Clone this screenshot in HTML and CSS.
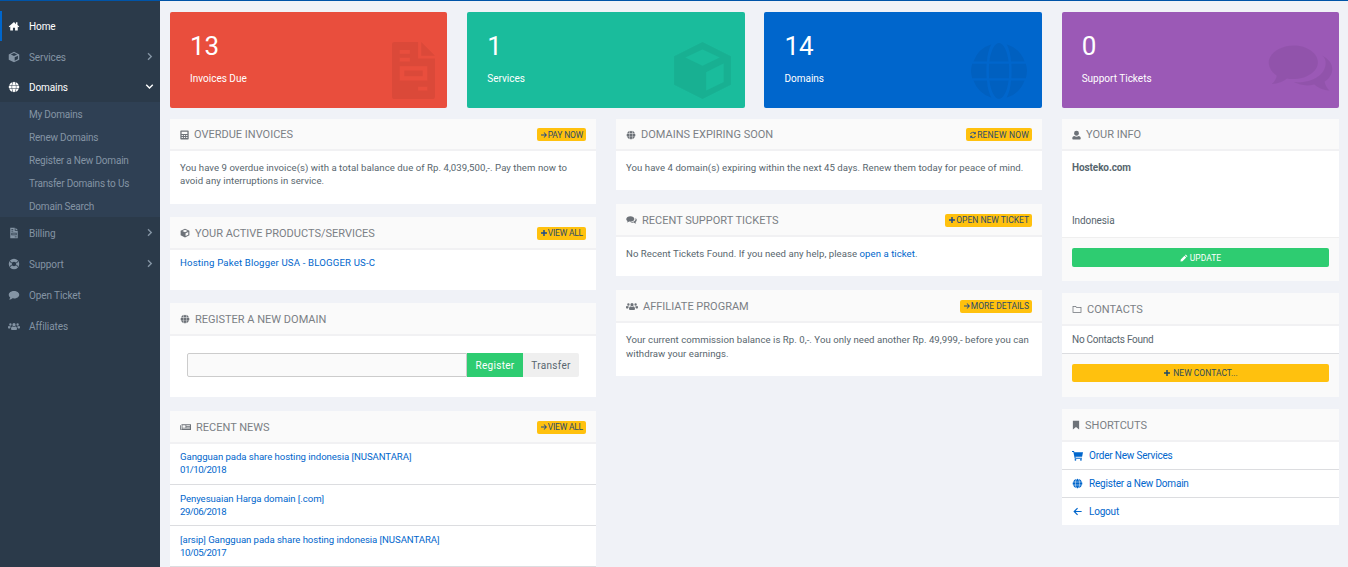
FILE: index.html
```html
<!DOCTYPE html>
<html lang="en">
<head>
<meta charset="utf-8">
<title>Client Area</title>
<link rel="stylesheet" href="styles.css">
</head>
<body>
<svg class="defs" width="0" height="0">
  <symbol id="i-home" viewBox="0 0 16 16"><path d="M8 2.500 1 8.600l.9 1L3 8.700V14h3.600v-3.600h2.800V14H13V8.700l1.100.9.9-1-2.400-2.100V3h-2v2.700z"/></symbol>
  <symbol id="i-cube" viewBox="0 0 16 16"><path fill-rule="evenodd" d="M8 1l7 3.500v7L8 15l-7-3.500v-7zM8 2.800 3.800 4.800 8 6.800l4.200-2zM8.900 8.400v4.500l4.300-2.100V6.300z"/></symbol>
  <symbol id="i-globe" viewBox="0 0 16 16"><path d="M5.600 5.600C5.900 3 6.900 1 8 1s2.100 2 2.400 4.600zM5 5.600H1.600A7 7 0 0 1 6.100 1.300C5.500 2.400 5.100 3.900 5 5.600zM11 5.600h3.400A7 7 0 0 0 9.900 1.300C10.500 2.400 10.900 3.900 11 5.600zM1.300 6.200H4.900C4.850 7.400 4.850 8.600 4.900 9.800H1.300C.9 8.600 .9 7.400 1.300 6.200zM5.500 6.200h5c.05 1.200.05 2.400 0 3.600h-5c-.05-1.200-.05-2.400 0-3.600zM11.100 6.200h3.600c.4 1.200.4 2.400 0 3.600h-3.600c.05-1.200.05-2.400 0-3.600zM5.600 10.400C5.900 13 6.900 15 8 15s2.100-2 2.400-4.600zM5 10.400H1.600A7 7 0 0 0 6.100 14.700C5.500 13.600 5.100 12.100 5 10.400zM11 10.400h3.400A7 7 0 0 1 9.900 14.700C10.500 13.600 10.900 12.100 11 10.400z"/></symbol>
  <symbol id="i-file" viewBox="1 0 14 20" preserveAspectRatio="none"><path fill-rule="evenodd" d="M1 0h8.500v5.800H15v13.400c0 .5-.3.800-.8.800H1.800c-.5 0-.8-.3-.8-.8V.8C1 .3 1.300 0 1.800 0zM10.500 0 15 4.800h-4.500zM3.500 2.800v1.300h3.300V2.800zm0 2.700v1.300h3.300V5.500zm0 3v5h9v-5zm1.500 1.500h6v2H5zm4.500 5.700v1.300h3v-1.300z"/></symbol>
  <symbol id="i-bill" viewBox="0 0 16 16"><path fill-rule="evenodd" d="M3 1h6v4h4v9.500c0 .3-.2.500-.5.500h-9c-.3 0-.5-.2-.5-.5zM10 1l3 3h-3zM4.500 3v1H7V3zm0 2v1H7V5zm0 2.500V11h7V7.500zm1 1h5V10h-5zm3.500 4V13.500h2.500v-1z"/></symbol>
  <symbol id="i-life" viewBox="0 0 16 16"><path fill-rule="evenodd" d="M8 1a7 7 0 1 0 0 14A7 7 0 0 0 8 1zm0 4a3 3 0 1 1 0 6 3 3 0 0 1 0-6zM3 3.900l2.300 2.300-.9.900L2.300 5zM13 3.900 13.700 5l-2.100 2.100-.9-.9zM4.400 8.900l.9.900L3 12.100 2.300 11zm7.200 0 2.100 2.100-.7 1.100-2.300-2.300z"/></symbol>
  <symbol id="i-comment" viewBox="0 0 16 16"><path d="M8 2.500c3.900 0 7 2.200 7 5s-3.100 5-7 5c-.7 0-1.300-.1-2-.2C5 13.200 3.500 14 1.500 14c.8-.8 1.300-1.700 1.500-2.700C1.800 10.400 1 9 1 7.500c0-2.800 3.100-5 7-5z"/></symbol>
  <symbol id="i-comments" viewBox="0 0 20 16"><path d="M8 1c4 0 7.200 2.300 7.200 5S12 11 8 11c-.7 0-1.300 0-2-.2C5 11.700 3.400 12.300 1.400 12.500c.8-.7 1.300-1.500 1.500-2.500C1.400 9 .5 7.600.5 6 .5 3.300 4 1 8 1z"/><path d="M16.400 4c1.900.9 3.100 2.400 3.100 4 0 1.500-.9 2.900-2.300 3.800.2 1 .7 1.900 1.500 2.700-2-.2-3.500-.9-4.600-1.900-.7.200-1.400.3-2.100.3-1.500 0-2.900-.4-4-1 5 .4 9.500-1.900 9.500-5.800 0-.7-.3-1.500-1.100-2.100z"/></symbol>
  <symbol id="i-users" viewBox="0 0 20 16"><path d="M10 3.200a2.700 2.700 0 1 1 0 5.400 2.700 2.700 0 0 1 0-5.400zM5 13c0-3 1.500-4 2.700-4 .7.500 1.400.8 2.300.8s1.600-.3 2.300-.8c1.200 0 2.700 1 2.700 4 0 1-.7 1.500-1.600 1.500H6.600C5.700 14.500 5 14 5 13zM4 3.500a2 2 0 1 1 0 4 2 2 0 0 1 0-4zm12 0a2 2 0 1 1 0 4 2 2 0 0 1 0-4zM0 10.300c0-1.600.7-2.300 1.800-2.300.6.400 1.400.6 2.200.5.200.5.500.9.900 1.100-1 .7-1.500 1.600-1.600 2.400H1.200C.5 12 0 11.400 0 10.300zm20 0c0 1.100-.5 1.700-1.200 1.700h-2.100c-.1-.8-.6-1.700-1.600-2.400.4-.2.700-.6.900-1.100.8.100 1.600-.1 2.200-.5 1.100 0 1.800.7 1.800 2.300z"/></symbol>
  <symbol id="i-calc" viewBox="1 1 14 14"><path fill-rule="evenodd" d="M2.500 1h11c.5 0 1 .5 1 1v12c0 .5-.5 1-1 1h-11c-.5 0-1-.5-1-1V2c0-.5.500-1 1-1zM3.500 3v3.500h9V3zm0 5v1.500h2V8zm3.500 0v1.500h2V8zm3.500 0v1.500h2V8zm-7 3v1.500h2V11zm3.500 0v1.500h2V11zm3.500 0v1.500h2V11z"/></symbol>
  <symbol id="i-news" viewBox="0 0 20 16"><path fill-rule="evenodd" d="M2 3h18v10.500H1.500C.7 13.500 0 12.800 0 12V5h1.500v7.500H3V4zM4.500 5v4.500H10V5zM11.500 5v1.200H18V5zm0 2.500v1.200H18V7.500zM4.500 10.500v1.200H18v-1.200z"/></symbol>
  <symbol id="i-user" viewBox="1 1 14 14"><path d="M8 1.500a3.800 3.800 0 0 1 3.800 3.800c0 2.100-1.700 4-3.800 4S4.200 7.400 4.200 5.300A3.800 3.800 0 0 1 8 1.500zM1.500 12.800c0-1.600 1.200-3 3.200-3.200.9.700 2 1.200 3.300 1.200s2.400-.5 3.300-1.200c2 .2 3.200 1.600 3.200 3.200v1c0 .6-.5 1.200-1.200 1.200H2.700c-.7 0-1.200-.6-1.200-1.200z"/></symbol>
  <symbol id="i-folder" viewBox="0 0 16 16"><path fill-rule="evenodd" d="M1 3h5l1.500 1.800H15V14H1zM2.200 4.200v8.600h11.600V6H7l-1.500-1.800z"/></symbol>
  <symbol id="i-bookmark" viewBox="2 0 12 16"><path d="M3 1h10v14l-5-3.700L3 15z"/></symbol>
  <symbol id="i-cart" viewBox="0 0 16 16"><path d="M0 1.500h3l.4 1.800H16l-1.300 6.500H5l.3 1.400h9.200v1.400H4L2 2.900H0zM5 13a1.300 1.300 0 1 1 0 2.600A1.300 1.300 0 0 1 5 13zm8 0a1.300 1.300 0 1 1 0 2.600 1.300 1.300 0 0 1 0-2.600z"/></symbol>
  <symbol id="i-pencil" viewBox="0 0 16 16"><path d="M11.500 1 15 4.500l-1.500 1.500L10 2.500zM9 3.500 12.500 7 5 14.500 1 15l.5-4z"/></symbol>
  <symbol id="i-refresh" viewBox="0 0 16 16"><path d="M13.500 1.500V6.500H8.500l2-2a4.200 4.200 0 0 0-6.400 1.300H2.200A6 6 0 0 1 11.800 3.200zM2.500 14.500V9.500h5l-2 2a4.200 4.200 0 0 0 6.400-1.300h1.900A6 6 0 0 1 4.200 12.800z"/></symbol>
  <symbol id="i-plus" viewBox="0 0 16 16"><path d="M6.500 2h3v4.500H14v3H9.500V14h-3V9.500H2v-3h4.500z"/></symbol>
  <symbol id="i-arrow" viewBox="0 0 16 16"><path d="M8.500 2.500 14 8l-5.500 5.500-1.200-1.200L10.800 8.900H2V7.100h8.800L7.300 3.700z"/></symbol>
  <symbol id="i-back" viewBox="0 0 16 16"><path d="M7.500 2.500 2 8l5.500 5.500 1.200-1.200L5.200 8.900H14V7.100H5.200l3.500-3.400z"/></symbol>
  <symbol id="i-right" viewBox="0 0 8 12"><path d="M2 1 7 6l-5 5-1.300-1.300L4.400 6 .7 2.300z"/></symbol>
  <symbol id="i-down" viewBox="0 0 12 8"><path d="M1 1.700 2.300.4 6 4.100 9.700.4 11 1.700 6 6.700z"/></symbol>
</svg>

<div class="app">
  <nav class="sidebar">
    <a class="nav-item active"><svg class="nav-icon"><use href="#i-home"/></svg><span>Home</span></a>
    <a class="nav-item"><svg class="nav-icon"><use href="#i-cube"/></svg><span>Services</span><svg class="chev"><use href="#i-right"/></svg></a>
    <a class="nav-item open"><svg class="nav-icon"><use href="#i-globe"/></svg><span>Domains</span><svg class="chev-down"><use href="#i-down"/></svg></a>
    <div class="submenu">
      <a>My Domains</a>
      <a>Renew Domains</a>
      <a>Register a New Domain</a>
      <a>Transfer Domains to Us</a>
      <a>Domain Search</a>
    </div>
    <a class="nav-item"><svg class="nav-icon"><use href="#i-bill"/></svg><span>Billing</span><svg class="chev"><use href="#i-right"/></svg></a>
    <a class="nav-item"><svg class="nav-icon"><use href="#i-life"/></svg><span>Support</span><svg class="chev"><use href="#i-right"/></svg></a>
    <a class="nav-item"><svg class="nav-icon"><use href="#i-comment"/></svg><span>Open Ticket</span></a>
    <a class="nav-item"><svg class="nav-icon"><use href="#i-users"/></svg><span>Affiliates</span></a>
  </nav>

  <main class="main">
    <section class="stats">
      <div class="stat red"><div class="stat-num">13</div><div class="stat-label">Invoices Due</div><svg class="stat-icon ic-file"><use href="#i-file"/></svg></div>
      <div class="stat teal"><div class="stat-num">1</div><div class="stat-label">Services</div><svg class="stat-icon ic-cube"><use href="#i-cube"/></svg></div>
      <div class="stat blue"><div class="stat-num">14</div><div class="stat-label">Domains</div><svg class="stat-icon ic-globe"><use href="#i-globe"/></svg></div>
      <div class="stat purple"><div class="stat-num">0</div><div class="stat-label">Support Tickets</div><svg class="stat-icon ic-comments"><use href="#i-comments"/></svg></div>
    </section>

    <section class="columns">
      <div class="col">
        <article class="panel p-overdue">
          <header class="panel-head"><svg class="head-icon w9"><use href="#i-calc"/></svg><h3>OVERDUE INVOICES</h3><a class="tag tight"><svg><use href="#i-arrow"/></svg>PAY NOW</a></header>
          <div class="panel-body"><p>You have 9 overdue invoice(s) with a total balance due of Rp. 4,039,500,-. Pay them now to avoid any interruptions in service.</p></div>
        </article>
        <article class="panel p-active">
          <header class="panel-head tall"><svg class="head-icon"><use href="#i-cube"/></svg><h3>YOUR ACTIVE PRODUCTS/SERVICES</h3><a class="tag tight"><svg><use href="#i-plus"/></svg>VIEW ALL</a></header>
          <div class="panel-body compact"><p><a class="link">Hosting Paket Blogger USA - BLOGGER US-C</a></p></div>
        </article>
        <article class="panel p-register">
          <header class="panel-head tall"><svg class="head-icon"><use href="#i-globe"/></svg><h3>REGISTER A NEW DOMAIN</h3></header>
          <div class="domain-form"><div class="domain-input"></div><a class="btn-register">Register</a><a class="btn-transfer">Transfer</a></div>
        </article>
        <article class="panel p-news">
          <header class="panel-head tall"><svg class="head-icon w11"><use href="#i-news"/></svg><h3>RECENT NEWS</h3><a class="tag tight"><svg><use href="#i-arrow"/></svg>VIEW ALL</a></header>
          <a class="news-row"><span>Gangguan pada share hosting indonesia [NUSANTARA]</span><span class="date">01/10/2018</span></a>
          <a class="news-row"><span>Penyesuaian Harga domain [.com]</span><span class="date">29/06/2018</span></a>
          <a class="news-row"><span>[arsip] Gangguan pada share hosting indonesia [NUSANTARA]</span><span class="date">10/05/2017</span></a>
        </article>
      </div>

      <div class="col">
        <article class="panel p-expiring">
          <header class="panel-head"><svg class="head-icon"><use href="#i-globe"/></svg><h3>DOMAINS EXPIRING SOON</h3><a class="tag loose"><svg><use href="#i-refresh"/></svg>RENEW NOW</a></header>
          <div class="panel-body"><p>You have 4 domain(s) expiring within the next 45 days. Renew them today for peace of mind.</p></div>
        </article>
        <article class="panel p-tickets">
          <header class="panel-head tall"><svg class="head-icon w11"><use href="#i-comments"/></svg><h3>RECENT SUPPORT TICKETS</h3><a class="tag"><svg><use href="#i-plus"/></svg>OPEN NEW TICKET</a></header>
          <div class="panel-body"><p>No Recent Tickets Found. If you need any help, please <a class="link">open a ticket</a>.</p></div>
        </article>
        <article class="panel p-affiliate">
          <header class="panel-head tall"><svg class="head-icon w12"><use href="#i-users"/></svg><h3>AFFILIATE PROGRAM</h3><a class="tag"><svg><use href="#i-arrow"/></svg>MORE DETAILS</a></header>
          <div class="panel-body roomy"><p>Your current commission balance is Rp. 0,-. You only need another Rp. 49,999,- before you can withdraw your earnings.</p></div>
        </article>
      </div>

      <div class="col">
        <article class="panel p-info">
          <header class="panel-head"><svg class="head-icon w9"><use href="#i-user"/></svg><h3>YOUR INFO</h3></header>
          <div class="info-body"><strong>Hosteko.com</strong><span>Indonesia</span></div>
          <footer class="panel-foot"><a class="btn-full green"><svg><use href="#i-pencil"/></svg>UPDATE</a></footer>
        </article>
        <article class="panel p-contacts">
          <header class="panel-head tall"><svg class="head-icon"><use href="#i-folder"/></svg><h3>CONTACTS</h3></header>
          <div class="contact-body">No Contacts Found</div>
          <footer class="panel-foot"><a class="btn-full yellow"><svg><use href="#i-plus"/></svg>NEW CONTACT...</a></footer>
        </article>
        <article class="panel p-shortcuts">
          <header class="panel-head tall"><svg class="head-icon w8"><use href="#i-bookmark"/></svg><h3>SHORTCUTS</h3></header>
          <a class="shortcut"><svg><use href="#i-cart"/></svg>Order New Services</a>
          <a class="shortcut"><svg><use href="#i-globe"/></svg>Register a New Domain</a>
          <a class="shortcut"><svg><use href="#i-back"/></svg>Logout</a>
        </article>
      </div>
    </section>
  </main>
</div>
</body>
</html>
```

FILE: styles.css
```css
* { box-sizing: border-box; }
html, body { margin: 0; height: 100%; overflow: hidden; }
body { font-family: Roboto, "Liberation Sans", sans-serif; font-size: 10px; letter-spacing: -.1px; color: #58666e; background: #f0f2f7; }
.defs { position: absolute; }
p, h3 { margin: 0; }

.app { display: flex; height: 100vh; border-top: 1px solid #0054a8; }
.sidebar { width: 160px; flex: none; background: #2b3a4a; padding-top: 10px; }
.main { flex: 1; padding: 11px 9px 0 10px; min-width: 0; }

.nav-item { display: flex; align-items: center; height: 31px; padding: 1px 0 0 8px; color: #8494a4; position: relative; }
.nav-item.active { color: #fff; height: 30px; padding-top: 0; }
.nav-item.active::before { content: ""; position: absolute; left: 0; top: 0; bottom: 0; width: 2px; background: #0066cc; }
.nav-item.open { color: #fff; height: 30px; padding-top: 0; }
.nav-icon { width: 12px; height: 12px; fill: currentColor; margin-right: 9px; flex: none; }
.chev { width: 6px; height: 9px; fill: currentColor; position: absolute; right: 7px; top: 11px; }
.chev-down { width: 9px; height: 6px; fill: currentColor; position: absolute; right: 6px; top: 12px; }
.submenu { background: #2f4054; height: 115px; padding-top: 1px; display: flex; flex-direction: column; letter-spacing: -.2px; }
.submenu a { height: 23px; flex: none; display: flex; align-items: center; padding-left: 29px; color: #8494a4; }

.stats { display: grid; grid-template-columns: repeat(4, 1fr); gap: 19.9px; }
.stat { height: 96px; border-radius: 2px; color: #fff; padding: 18px 20px 0; position: relative; overflow: hidden; letter-spacing: 0; }
.stat-num { font-size: 26px; line-height: 32px; }
.stat-label { margin-top: 11px; line-height: 12px; }
.red { background: #e94e3d; }
.teal { background: #1abc9c; }
.blue { background: #0066cc; }
.purple { background: #9b59b6; }
.stat-icon { position: absolute; fill: rgba(0,0,0,.06); }
.ic-file { width: 43px; height: 57px; right: 12px; top: 30px; }
.ic-cube { width: 65px; height: 65px; right: 10px; top: 26px; }
.ic-globe { width: 64px; height: 64px; right: 11px; top: 27px; }
.ic-comments { width: 67px; height: 54px; right: 5px; top: 30px; }

.columns { display: grid; grid-template-columns: 426px 426px 1fr; gap: 20px; margin-top: 11px; }
.col { display: flex; flex-direction: column; min-width: 0; }
.panel { background: #fff; }
.p-overdue { height: 85px; margin-bottom: 13px; }
.p-active { height: 73px; margin-bottom: 13px; }
.p-register { height: 94px; margin-bottom: 14px; }
.p-expiring { height: 71px; margin-bottom: 14px; }
.p-tickets { height: 72px; margin-bottom: 14px; }
.p-affiliate { height: 86px; }
.p-info { height: 162px; margin-bottom: 12px; }
.p-contacts { height: 103px; margin-bottom: 13px; }

.panel-head { display: flex; align-items: center; height: 32px; padding: 1px 10px 0; background: #fafafa; border-bottom: 2px solid #f1f1f3; }
.panel-head.tall { height: 33px; }
.panel-head h3 { font-size: 11px; font-weight: 400; color: #7a7f85; letter-spacing: 0; flex: 1; }
.head-icon { width: 10px; height: 10px; fill: #6d7278; margin-right: 5px; flex: none; }
.head-icon.w8 { width: 8px; }
.head-icon.w9 { width: 9px; }
.head-icon.w11 { width: 11px; }
.head-icon.w12 { width: 12px; }
.tag { display: inline-flex; align-items: center; height: 13px; padding: 0 3px; background: #ffc10e; border-radius: 2px; color: #2c4a6a; font-size: 8.5px; letter-spacing: 0; }
.tag.tight { letter-spacing: -.2px; }
.tag.loose { letter-spacing: .2px; }
.tag svg { width: 8px; height: 8px; fill: #1f4a8a; margin-right: 0; }
.panel-body { padding: 10px; line-height: 13px; font-size: 9.6px; letter-spacing: .05px; }
.panel-body.compact { padding-top: 6px; letter-spacing: .17px; }
.panel-body.roomy { line-height: 14px; }
.link { color: #0066cc; }

.domain-form { display: flex; height: 24px; margin: 17px 17px 0; letter-spacing: .3px; }
.domain-input { flex: 1; background: #fafafa; border: 1px solid #ccc; border-radius: 2px 0 0 2px; }
.btn-register { width: 56px; background: #2ecc71; color: #fff; display: flex; align-items: center; justify-content: center; }
.btn-transfer { width: 56px; background: #efefef; color: #58666e; display: flex; align-items: center; justify-content: center; border-radius: 0 2px 2px 0; }

.news-row { display: flex; flex-direction: column; justify-content: center; height: 41px; padding: 0 10px; color: #0066cc; font-size: 9.6px; line-height: 13px; border-bottom: 1px solid #dcdde0; letter-spacing: -.06px; }
.panel-head + .news-row { padding-bottom: 2px; }
.date { letter-spacing: -.5px; }

.info-body { height: 87px; padding: 10px; display: flex; flex-direction: column; line-height: 13px; border-bottom: 1px solid #efefef; }
.info-body strong { font-weight: 700; color: #58666e; }
.info-body span { margin-top: 40px; }
.panel-foot { padding: 10px; background: #fafafa; height: 43px; }
.btn-full { display: flex; align-items: center; justify-content: center; height: 19px; border-radius: 2px; font-size: 8.5px; letter-spacing: 0; }
.btn-full svg { width: 8px; height: 8px; margin-right: 2px; }
.green { background: #2ecc71; color: #fff; fill: #fff; }
.yellow { background: #ffc10e; color: #2c4a5a; fill: #1f4a6a; height: 18px; }
.contact-body { height: 28px; padding: 0 10px 1px; display: flex; align-items: center; border-bottom: 1px solid #dcdde0; letter-spacing: -.25px; }
.shortcut { display: flex; align-items: center; height: 28px; padding: 0 10px 1px; color: #0066cc; border-bottom: 1px solid #dcdde0; letter-spacing: -.2px; }
.shortcut:last-child { border-bottom: 0; height: 27px; padding-bottom: 0; }
.shortcut svg { width: 11px; height: 11px; fill: #0066cc; margin-right: 6px; flex: none; }
```
